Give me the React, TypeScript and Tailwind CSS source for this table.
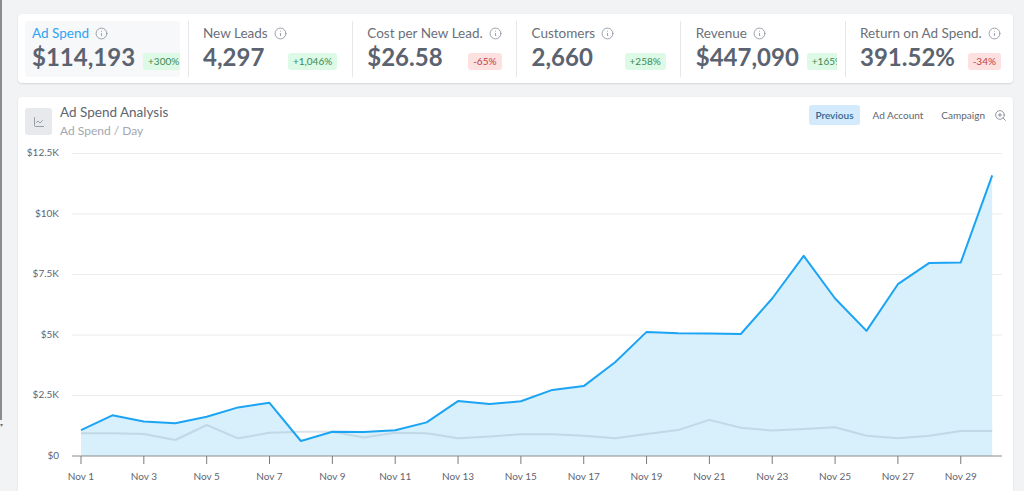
import { ChartLine, Info, ZoomIn } from 'lucide-react';

const kpis = [
  { label: 'Ad Spend', value: '$114,193', change: '+300%', up: true, active: true },
  { label: 'New Leads', value: '4,297', change: '+1,046%', up: true },
  { label: 'Cost per New Lead.', value: '$26.58', change: '-65%', up: false },
  { label: 'Customers', value: '2,660', change: '+258%', up: true },
  { label: 'Revenue', value: '$447,090', change: '+165%', up: true },
  { label: 'Return on Ad Spend.', value: '391.52%', change: '-34%', up: false },
];

const spend = [
  1.07, 1.68, 1.42, 1.35, 1.62, 2.01, 2.2, 0.62, 1.0, 0.99, 1.06, 1.39, 2.27, 2.15, 2.26,
  2.73, 2.89, 3.87, 5.13, 5.07, 5.06, 5.04, 6.51, 8.27, 6.51, 5.17, 7.1, 7.98, 8.0, 11.6,
];

const previous = [
  0.94, 0.94, 0.91, 0.66, 1.28, 0.73, 0.96, 1.0, 1.0, 0.77, 0.96, 0.94, 0.73, 0.8, 0.9,
  0.9, 0.84, 0.73, 0.91, 1.07, 1.49, 1.17, 1.05, 1.12, 1.19, 0.84, 0.73, 0.84, 1.03, 1.03,
];

const yTicks = ['$0', '$2.5K', '$5K', '$7.5K', '$10K', '$12.5K'];

const X = (i: number) => 63 + i * 31.42;
const Y = (v: number) => 316 - v * 24.2;

function KpiCell({ k, wide }: { k: (typeof kpis)[number]; wide?: boolean }) {
  return (
    <div
      className={`${wide ? 'w-[155px] shrink-0' : 'flex-1 min-w-0'} h-[56px] px-[7px] pt-[3px] overflow-hidden rounded-[3px] ${k.active ? 'bg-[#f7f8fa]' : ''}`}
    >
      <div className="flex items-center gap-[6px] h-[20px]">
        <span className={`text-[13.5px] leading-none whitespace-nowrap ${k.active ? 'text-[#2ea3f2]' : 'text-[#6b7079]'}`}>
          {k.label}
        </span>
        <Info size={13} strokeWidth={1.6} className="text-[#8d939c] shrink-0" />
      </div>
      <div className="flex items-end justify-between gap-[8px] -mt-[1px]">
        <span className="text-[24px] font-bold leading-[28px] text-[#5c6370] whitespace-nowrap">{k.value}</span>
        <span
          className={`shrink-0 mb-[1px] px-[5px] h-[17px] flex items-center rounded-[3px] text-[10px] whitespace-nowrap ${k.up ? 'bg-[#dcfae6] text-[#3b8a55]' : 'bg-[#fde0e0] text-[#c0413f]'}`}
        >
          {k.change}
        </span>
      </div>
    </div>
  );
}

function Chart() {
  const line = spend.map((v, i) => `${i ? 'L' : 'M'}${X(i).toFixed(1)} ${Y(v).toFixed(1)}`).join(' ');
  const area = `${line} L${X(29).toFixed(1)} 316 L${X(0).toFixed(1)} 316 Z`;
  const prev = previous.map((v, i) => `${i ? 'L' : 'M'}${X(i).toFixed(1)} ${Y(v).toFixed(1)}`).join(' ');
  return (
    <svg width="995" height="360" className="block" style={{ fontFamily: 'Lato, "Liberation Sans", sans-serif' }}>
      {yTicks.map((t, i) => (
        <g key={t}>
          {i > 0 && <line x1="54" x2="984" y1={316 - i * 60.5} y2={316 - i * 60.5} stroke="#ececec" strokeWidth="1" />}
          <text x="41" y={316 - i * 60.5} textAnchor="end" dominantBaseline="middle" fontSize="10" fill="#5f6570">
            {t}
          </text>
        </g>
      ))}
      <path d={area} fill="#d8effc" />
      <path d={prev} fill="none" stroke="#9fb6c8" strokeOpacity="0.4" strokeWidth="2" strokeLinejoin="round" />
      <path d={line} fill="none" stroke="#1ba4f4" strokeWidth="2" strokeLinejoin="round" />
      <line x1="54" x2="984" y1="316" y2="316" stroke="#8a8a8a" strokeWidth="1" />
      {spend.map((_, i) =>
        i % 2 === 0 ? (
          <g key={i}>
            <line x1={X(i)} x2={X(i)} y1="316" y2="324" stroke="#7a7a7a" strokeWidth="1" />
            <text x={X(i)} y="337" textAnchor="middle" dominantBaseline="middle" fontSize="10" fill="#5f6570">
              Nov {i + 1}
            </text>
          </g>
        ) : null,
      )}
    </svg>
  );
}

export default function App() {
  return (
    <div
      className="relative h-[491px] w-[1024px] overflow-hidden bg-[#f2f3f5]"
      style={{ fontFamily: 'Lato, "Liberation Sans", sans-serif' }}
    >
      <div className="absolute left-0 top-0 h-[420px] w-[2px] bg-[#8c8c8c]" />
      <div className="absolute left-0 top-[422px] text-[6px] leading-none text-[#777]">▾</div>

      <div className="flex flex-col gap-[14px] pl-[18px] pr-[11px] pt-[14px]">
        <div className="flex items-center h-[69px] pl-[7px] pr-[5px] bg-white rounded-[4px] shadow-[0_1px_2px_rgba(0,0,0,0.12)]">
          {kpis.map((k, i) => (
            <div key={k.label} className={`flex items-center ${i === 0 || i === 5 ? 'shrink-0' : 'flex-1 min-w-0'}`}>
              {i > 0 && <div className="w-px h-[56px] bg-[#e6e7ea] mx-[7.5px] shrink-0" />}
              <KpiCell k={k} wide={i === 0 || i === 5} />
            </div>
          ))}
        </div>

        <div className="bg-white rounded-[4px] shadow-[0_1px_2px_rgba(0,0,0,0.12)] h-[420px]">
          <div className="flex items-start justify-between pl-[7px] pr-[6px] pt-[11px]">
            <div className="flex items-start gap-[8px]">
              <div className="w-[27px] h-[27px] rounded-[3px] bg-[#e8e9ec] flex items-center justify-center">
                <ChartLine size={12} strokeWidth={1.5} className="text-[#80868f]" />
              </div>
              <div className="flex flex-col">
                <span className="text-[13.5px] leading-[17px] -mt-[4px] text-[#5f6570]">Ad Spend Analysis</span>
                <span className="text-[12px] leading-[15px] mt-[2px] text-[#a2a7af]">Ad Spend / Day</span>
              </div>
            </div>
            <div className="flex items-center text-[10px] -mt-[3px]">
              <span className="px-[6px] h-[20px] flex items-center rounded-[3px] bg-[#d2eafb] text-[#33678f] font-semibold">
                Previous
              </span>
              <span className="ml-[13px] text-[#5f6570]">Ad Account</span>
              <span className="ml-[18px] text-[#5f6570]">Campaign</span>
              <ZoomIn size={13} strokeWidth={1.6} className="ml-[9px] text-[#7f858e]" />
            </div>
          </div>
          <div className="mt-[2px]">
            <Chart />
          </div>
        </div>
      </div>
    </div>
  );
}
